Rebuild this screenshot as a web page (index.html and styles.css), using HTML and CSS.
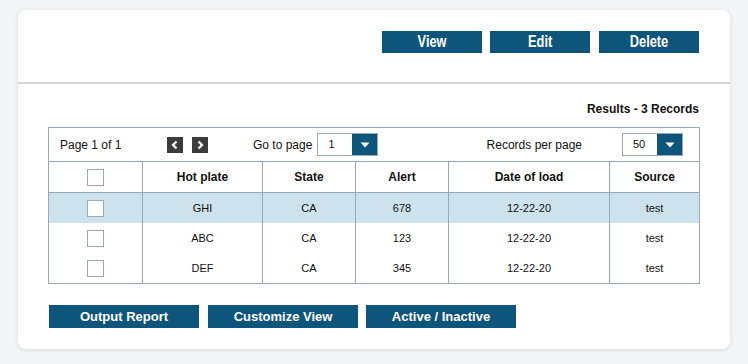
FILE: index.html
```html
<!DOCTYPE html>
<html>
<head>
<meta charset="utf-8">
<link rel="stylesheet" href="styles.css">
</head>
<body>
<div class="card">
  <div class="top">
    <button class="btn top-btn"><span class="narrow">View</span></button>
    <button class="btn top-btn"><span class="narrow">Edit</span></button>
    <button class="btn top-btn"><span class="narrow">Delete</span></button>
  </div>
  <div class="main">
    <div class="results">Results - 3 Records</div>
    <div class="grid">
      <div class="pager">
        <span class="page-info">Page 1 of 1</span>
        <span class="arrows">
          <span class="arrow"><svg width="16" height="16" viewBox="0 0 16 16"><path d="M9.5 4.5 L6 8 L9.5 11.5" fill="none" stroke="#fff" stroke-width="2.2"/></svg></span>
          <span class="arrow"><svg width="16" height="16" viewBox="0 0 16 16"><path d="M6.5 4.5 L10 8 L6.5 11.5" fill="none" stroke="#fff" stroke-width="2.2"/></svg></span>
        </span>
        <span class="goto">Go to page</span>
        <span class="select"><span class="val">1</span><span class="drop"><svg width="10" height="6" viewBox="0 0 10 6"><path d="M0.5 0.5 L9.5 0.5 L5 5.5 Z" fill="#fff"/></svg></span></span>
        <span class="rpp">Records per page</span>
        <span class="select last"><span class="val">50</span><span class="drop"><svg width="10" height="6" viewBox="0 0 10 6"><path d="M0.5 0.5 L9.5 0.5 L5 5.5 Z" fill="#fff"/></svg></span></span>
      </div>
      <div class="row head">
        <div class="cell"><span class="cb"></span></div>
        <div class="cell">Hot plate</div>
        <div class="cell">State</div>
        <div class="cell">Alert</div>
        <div class="cell">Date of load</div>
        <div class="cell">Source</div>
      </div>
      <div class="row sel">
        <div class="cell"><span class="cb"></span></div>
        <div class="cell">GHI</div>
        <div class="cell">CA</div>
        <div class="cell">678</div>
        <div class="cell">12-22-20</div>
        <div class="cell">test</div>
      </div>
      <div class="row">
        <div class="cell"><span class="cb"></span></div>
        <div class="cell">ABC</div>
        <div class="cell">CA</div>
        <div class="cell">123</div>
        <div class="cell">12-22-20</div>
        <div class="cell">test</div>
      </div>
      <div class="row">
        <div class="cell"><span class="cb"></span></div>
        <div class="cell">DEF</div>
        <div class="cell">CA</div>
        <div class="cell">345</div>
        <div class="cell">12-22-20</div>
        <div class="cell">test</div>
      </div>
    </div>
    <div class="actions">
      <button class="btn bot-btn">Output Report</button>
      <button class="btn bot-btn">Customize View</button>
      <button class="btn bot-btn">Active / Inactive</button>
    </div>
  </div>
</div>
</body>
</html>
```
FILE: styles.css
```css
* { box-sizing: border-box; }
html, body { margin: 0; padding: 0; }
body {
  background: #f3f4f6;
  font-family: "Liberation Sans", Arial, sans-serif;
  color: #111;
  width: 748px;
  height: 364px;
  overflow: hidden;
}
.card {
  margin: 10px 18px 0 18px;
  width: 712px;
  height: 339px;
  background: #fff;
  border-radius: 8px;
  box-shadow: 0 1px 4px rgba(0,0,0,0.12);
}
.top {
  height: 74px;
  border-bottom: 2px solid #d6d6d6;
  display: flex;
  justify-content: flex-end;
  align-items: flex-start;
  padding: 21px 31px 0 0;
  gap: 8px;
}
.btn {
  border: none;
  background: #0e557b;
  color: #fff;
  padding: 0;
  margin: 0;
  cursor: pointer;
}
.top-btn {
  width: 100px;
  height: 22px;
  font-family: "Liberation Sans", Arial, sans-serif;
  font-weight: bold;
  font-size: 16px;
  display: flex;
  align-items: center;
  justify-content: center;
}
.narrow {
  display: inline-block;
  transform: scaleX(0.8);
  line-height: 1;
}
.top-btn:nth-child(3) { margin-left: 1px; }
.main {
  padding: 18px 31px 0 30px;
}
.results {
  text-align: right;
  font-size: 12px;
  font-weight: bold;
  line-height: 14px;
  margin-bottom: 11px;
}
.grid {
  border: 1px solid #98a8b6;
  width: 652px;
}
.pager {
  height: 34px;
  border-bottom: 1px solid #98a8b6;
  display: flex;
  align-items: center;
  font-size: 12px;
  padding-left: 11px;
}
.page-info { width: 107px; }
.arrows { display: flex; gap: 9px; }
.arrow {
  width: 16px;
  height: 16px;
  background: #3c3c3c;
  display: block;
}
.arrow svg { display: block; }
.goto { margin-left: 45px; margin-right: 5px; }
.select {
  display: flex;
  width: 61px;
  height: 23px;
  border: 1px solid #98a8b6;
}
.select .val {
  flex: 1;
  font-size: 11px;
  line-height: 21px;
  padding-left: 10px;
}
.select .drop {
  width: 25px;
  background: #0e557b;
  display: flex;
  align-items: center;
  justify-content: center;
}
.select .drop svg { display: block; }
.rpp { margin-left: auto; margin-right: 40px; }
.select.last { margin-right: 16px; }
.row {
  display: grid;
  grid-template-columns: 93px 120px 93px 93px 161px 90px;
  height: 30px;
  font-size: 11px;
}
.row.head {
  height: 31px;
  border-bottom: 1px solid #98a8b6;
  font-size: 12px;
  font-weight: bold;
}
.row.sel { background: #cce3ed; }
.cell {
  display: flex;
  align-items: center;
  justify-content: center;
}
.cell + .cell { border-left: 1px solid #98a8b6; }
.cb {
  width: 17px;
  height: 17px;
  border: 1px solid #98a8b6;
  background: #fff;
  display: block;
}
.actions {
  display: flex;
  gap: 9px;
  margin-top: 21px;
  margin-left: 1px;
}
.bot-btn {
  width: 150px;
  height: 23px;
  font-size: 13px;
  font-weight: bold;
  font-family: "Liberation Sans", Arial, sans-serif;
}
.bot-btn:nth-child(3) { margin-left: -1px; }
```
